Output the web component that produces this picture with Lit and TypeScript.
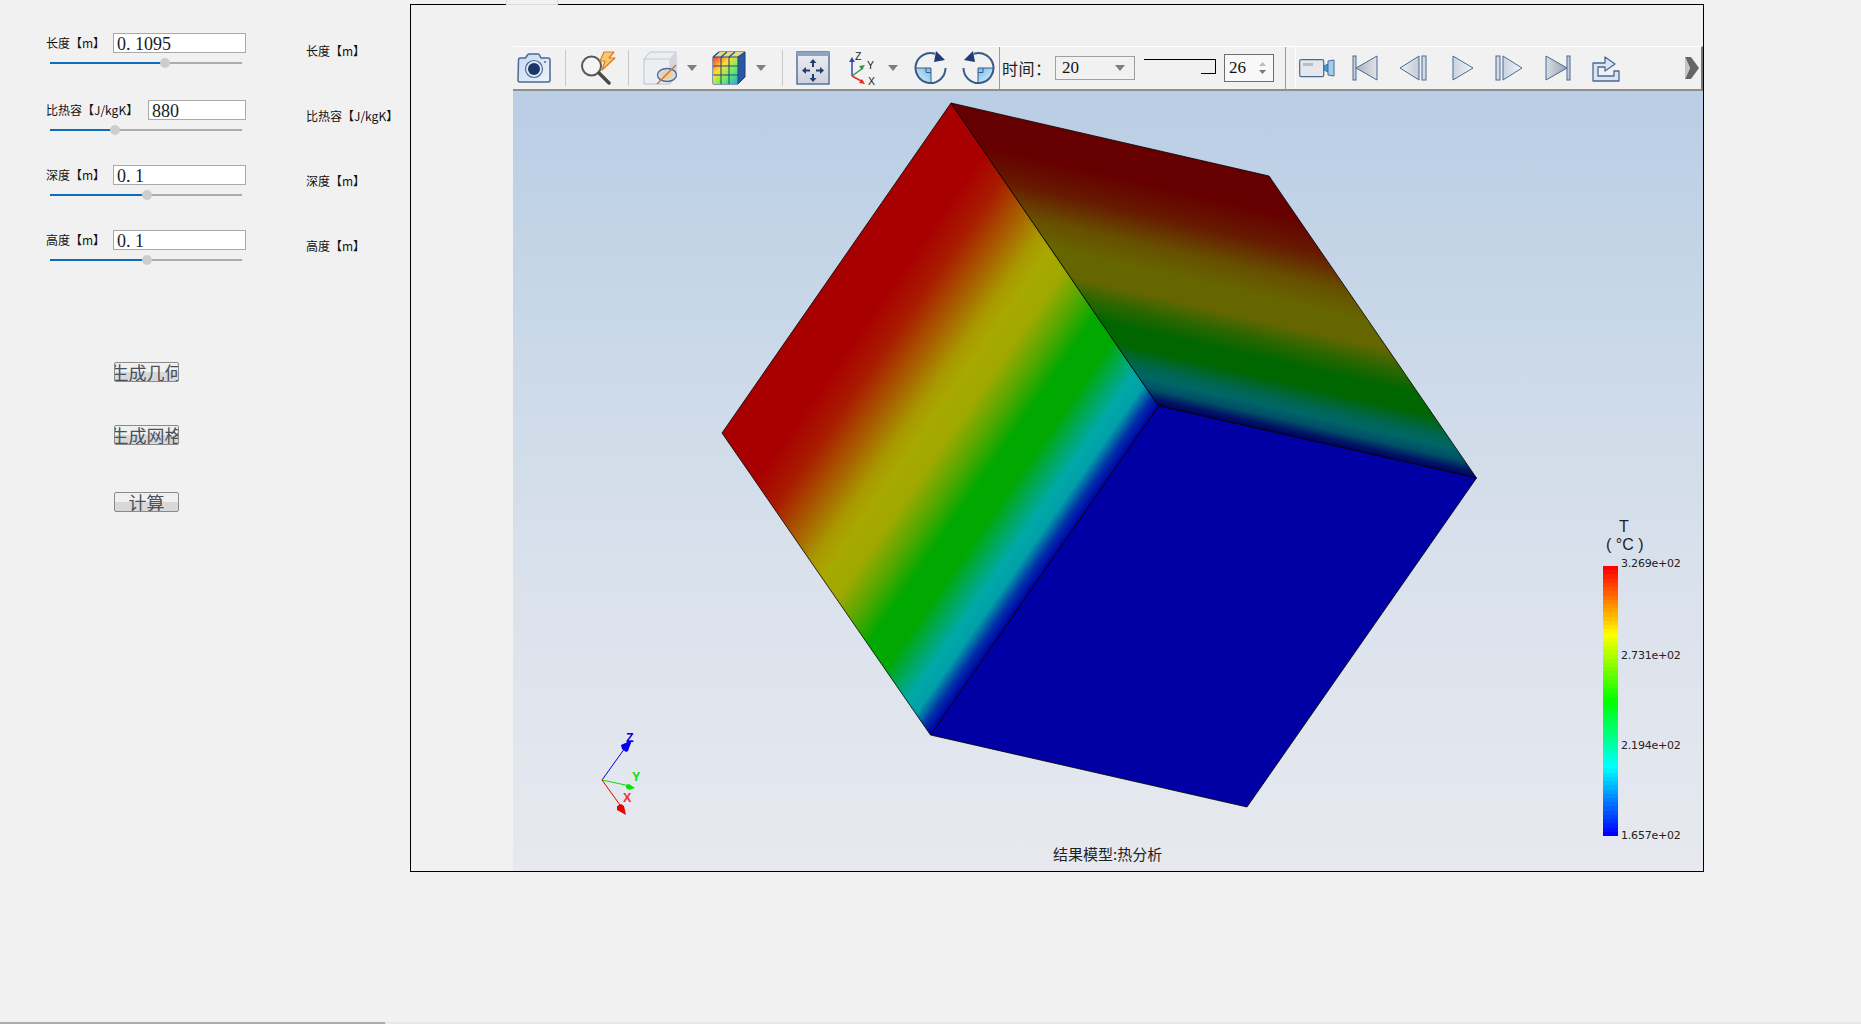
import { LitElement, html, css, svg } from "lit";
import { customElement } from "lit/decorators.js";

const params = [
  { label: "长度【m】", value: "0. 1095", pct: 60, cls: "r1", short: false },
  { label: "比热容【J/kgK】", value: "880", pct: 34, cls: "r2", short: true },
  { label: "深度【m】", value: "0. 1", pct: 50.5, cls: "r3", short: false },
  { label: "高度【m】", value: "0. 1", pct: 50.5, cls: "r4", short: false },
];

function rainbow(t: number): string {
  const seg = Math.min(3, Math.floor(t * 4));
  const f = t * 4 - seg;
  const c = Math.round(f * 255);
  const d = 255 - c;
  return [`rgb(255,${c},0)`, `rgb(${d},255,0)`, `rgb(0,255,${c})`, `rgb(0,${d},255)`][seg];
}
const BANDS = 64;
const barStops = Array.from({ length: BANDS }, (_, i) => {
  const col = rainbow(i / (BANDS - 1));
  return `${col} ${(i * 100) / BANDS}% ${((i + 1) * 100) / BANDS}%`;
}).join(",");

const drop = (cls: string) => html`<svg class="drop ${cls}" width="10" height="6" viewBox="0 0 10 6"><path d="M0 0h10L5 6z" fill="#7f7f7f"/></svg>`;

const S = "#4a6a94";

const rotateShape = svg`
  <path d="M1.500 17H17V32A15.500 15.500 0 0 1 1.500 17z" fill="url(#rg)"/>
  <path d="M1.500 17H17V31.500M12 17v4.500h5" fill="none" stroke="#3a5a84" stroke-width="1"/>
  <path d="M31.500 17A15 15 0 1 1 21 2.700" fill="none" stroke="#3a5a84" stroke-width="2"/>
  <path d="M22 0L31 9 20 11z" fill="#1f3d74"/>
`;

@customElement("app-root")
export class AppRoot extends LitElement {
  static styles = css`
    :host { display: block; width: 1861px; height: 1024px; background: #f1f1f1; position: relative; overflow: hidden;
      font-family: "Noto Sans CJK SC", "Liberation Sans", sans-serif; color: #111; }
    .page { display: flex; align-items: flex-start; height: 1024px; }
    .side { width: 306px; flex: none; padding: 33px 0 0 46px; box-sizing: border-box; }
    .rows { display: flex; flex-direction: column; width: 200px; }
    .row { height: 65px; }
    .row.r1 { height: 67px; }
    .line { display: flex; align-items: center; justify-content: space-between; height: 20px; }
    .lab { font-size: 12px; line-height: 20px; white-space: nowrap; }
    .in { width: 133px; height: 20px; box-sizing: border-box; border: 1px solid #a9a9a9; background: #fff;
      font: 18px/18px "Liberation Serif", "Noto Sans CJK SC", serif; padding: 1px 0 0 3px; color: #1a1a2a; white-space: pre; overflow: hidden; }
    .in.short { width: 98px; }
    .slider { width: 192px; margin: 9px 0 0 4px; height: 2px; background: #acacac; position: relative; }
    .slider b { display: block; height: 2px; background: #0f6cbd; }
    .slider u { position: absolute; top: -4px; width: 10px; height: 10px; margin-left: -5px; border-radius: 50%; background: #cdcdcd; }
    .btns { display: flex; flex-direction: column; margin: 67px 0 0 68px; gap: 43px; }
    .btn { width: 65px; height: 20px; box-sizing: border-box; border: 1px solid #8a8a8a; border-radius: 2px;
      background: linear-gradient(#f0f0f0 50%, #d8d8d8 50%); font: 18px/18px "Noto Sans CJK SC", sans-serif; color: #4a5060;
      overflow: hidden; white-space: nowrap; display: flex; justify-content: center; }
    .btn.third { margin-top: 4px; }
    .labs { width: 104px; flex: none; padding-top: 41px; display: flex; flex-direction: column; gap: 45px; font-size: 12px; line-height: 20px; }
    .labs div { white-space: nowrap; height: 20px; }
    .frame { width: 1294px; height: 868px; margin-top: 4px; border: 1px solid #000; background: #f1f1f1;
      padding: 41px 0 0 102px; box-sizing: border-box; position: relative; }
    .tab { position: absolute; left: 95px; top: -5px; width: 52px; height: 5px; box-sizing: border-box; background: #f1f1f1; border: 1px solid #dcdcdc; border-top: 0; }
    .toolbar { height: 45px; width: 1190px; box-sizing: border-box; border-top: 1px solid #fff; border-bottom: 2px solid #8e8e8e; border-right: 2px solid #777;
      display: flex; align-items: center; background: #f1f1f1; }
    .ic { flex: none; display: block; }
    .sep { flex: none; width: 1px; height: 36px; background: #c8c8c8; }
    .sep.full { height: 42px; background: #9a9a9a; }
    .vwhite { flex: none; width: 1px; height: 42px; background: #fff; margin-left: 9px; }
    .drop { flex: none; }
    .time { font: 16px/20px "Noto Sans CJK SC", sans-serif; letter-spacing: .5px; margin-left: 2px; white-space: nowrap; width: 53px; flex: none; color: #222; }
    .combo { width: 80px; height: 24px; box-sizing: border-box; border: 1px solid #a0a0a0; display: flex; align-items: center; justify-content: space-between; padding: 0 9px 0 6px;
      font: 17px "Liberation Serif", serif; flex: none; }
    .tslider { flex: none; width: 72px; height: 15px; margin: -3px 0 0 9px; position: relative; border-top: 1px solid #000; box-sizing: border-box; }
    .tslider i { position: absolute; right: 0; top: 0; width: 14px; height: 13px; border-right: 1px solid #000; border-bottom: 1px solid #000; background: #f1f1f1; }
    .spin { flex: none; margin-left: 8px; width: 50px; height: 28px; box-sizing: border-box; border: 1px solid #6e6e6e; display: flex; align-items: center; justify-content: space-between; padding: 0 7px 0 4px;
      font: 17px "Liberation Serif", serif; background: #f8f8f8; }
    .arrows { display: flex; flex-direction: column; gap: 4px; }
    .arrows svg { display: block; }
    .grow { flex: 1; }
    .m3 { margin-left: 3px; } .m4 { margin-left: 4px; }
    .m10 { margin-left: 10px; } .m11 { margin-left: 11px; } .m12 { margin-left: 12px; } .m13 { margin-left: 13px; }
    .m14 { margin-left: 14px; } .m15 { margin-left: 15px; } .m16 { margin-left: 16px; } .m17 { margin-left: 17px; }
    .m19 { margin-left: 19px; } .m21 { margin-left: 21px; } .m22 { margin-left: 22px; } .m25 { margin-left: 25px; }
    .mr2 { margin-right: 2px; }
    .view { width: 1190px; height: 780px; background: linear-gradient(#b9cde4 0%, #c9d8e8 30%, #dbe2ec 65%, #e7e9ef 100%); position: relative; overflow: hidden; }
    .scene { position: absolute; left: 0; top: 0; }
    .legend { position: absolute; left: 1090px; top: 428px; width: 100px; height: 330px; }
    .t { position: absolute; left: 16px; top: -1px; font: 16px/18px "Liberation Sans", sans-serif; color: #222; }
    .u { position: absolute; left: 3px; top: 17px; font: 16px/18px "Liberation Sans", sans-serif; color: #222; white-space: pre; }
    .bar { position: absolute; left: 0; top: 47px; width: 15px; height: 270px; }
    .tick { position: absolute; left: 18px; font: 11px/14px "DejaVu Sans", sans-serif; letter-spacing: -0.2px; color: #222; white-space: nowrap; }
    .k1 { top: 38px; } .k2 { top: 130px; } .k3 { top: 220px; } .k4 { top: 310px; }
    .caption { position: absolute; left: 540px; top: 753px; font-size: 15px; line-height: 20px; color: #222; white-space: nowrap; }
    .bottom { position: absolute; left: 0; bottom: 0; width: 385px; height: 2px; background: #acacac; }
    .bottom2 { position: absolute; left: 385px; right: 0; bottom: 0; height: 2px; background: #e8e8e8; }
  `;

  private icons() {
    return html`
      <svg class="ic m4" width="34" height="30" viewBox="0 0 34 30">
        <defs><linearGradient id="cam" x1="0" y1="0" x2="1" y2="1"><stop offset="0" stop-color="#c5d9f0"/><stop offset="1" stop-color="#eef4fb"/></linearGradient></defs>
        <path d="M1.500 7q0-2 2-2h5l2-3q.5-1 2-1h8q1.500 0 2 1l1.500 3h7q2 0 2 2v20q0 2-2 2h-28q-2 0-2-2z" fill="url(#cam)" stroke="${S}" stroke-width="1.500"/>
        <circle cx="17" cy="16" r="8.500" fill="#dfe9f6" stroke="${S}" stroke-width="1.200"/><circle cx="17" cy="16" r="6" fill="#1c3568"/>
        <circle cx="28" cy="9" r="1" fill="${S}"/>
      </svg>
      <i class="sep m14"></i>
      <svg class="ic m14" width="36" height="34" viewBox="0 0 36 34">
        <circle cx="11.500" cy="15" r="9.500" fill="#f4f4f4" stroke="#5a5a5a" stroke-width="2"/>
        <path d="M19 22l10 10" stroke="#4a4a4a" stroke-width="3.500" stroke-linecap="round"/>
        <path d="M24 1h10l-5 6h6L22 19l3-9h-5z" fill="#f6c875" stroke="#d97d1e" stroke-width="1.200" stroke-linejoin="round"/>
      </svg>
      <i class="sep m12"></i>
      <svg class="ic m14" width="34" height="34" viewBox="0 0 34 34">
        <path d="M1 8l6-7h26v24l-6 8H1z" fill="#eceef1" stroke="#bcc4d0"/>
        <path d="M1 8h26l6-7M27 8v25" fill="none" stroke="#c4cad4"/>
        <path d="M27 8l6-7v24l-6 8z" fill="#d3d6dc"/>
        <ellipse cx="24" cy="24" rx="9.500" ry="6.500" fill="#d8dce2" stroke="${S}" stroke-width="1.300"/><ellipse cx="24" cy="24" rx="6" ry="4" fill="#ead09a"/>
        <path d="M14 33L33 14" stroke="#d0703a" stroke-width="1.400"/>
      </svg>
      ${drop("m10")}
      <svg class="ic m15" width="34" height="34" viewBox="0 0 34 34">
        <defs><linearGradient id="cg" x1="0" y1="0" x2="1" y2="1"><stop offset="0" stop-color="#f33"/><stop offset=".35" stop-color="#fd3"/><stop offset=".65" stop-color="#6e6"/><stop offset="1" stop-color="#2ad"/></linearGradient></defs>
        <path d="M7 1h26v25l-7 7H1V6z" fill="#2a56a6" stroke="#1f3d74"/>
        <rect x="1" y="6" width="25" height="27" fill="url(#cg)"/>
        <path d="M7 1h26l-7 5H1z" fill="#e4d98e"/>
        <path d="M1 15h25M1 24h25M9 6v27M17 6v27M1 6h25M26 6v27M1 6l6-5M9 6l6-5M17 6l6-5M26 6l7-5" stroke="#2a4a74" stroke-width="1.100" fill="none"/>
      </svg>
      ${drop("m10")}
      <i class="sep m16"></i>
      <svg class="ic m13" width="34" height="34" viewBox="0 0 34 34">
        <defs><linearGradient id="fitg" x1="0" y1="0" x2="0" y2="1"><stop offset="0" stop-color="#eceef2"/><stop offset="1" stop-color="#cdd2dc"/></linearGradient></defs>
        <rect x="1" y="1" width="32" height="32" fill="url(#fitg)" stroke="${S}" stroke-width="1.400"/><rect x="1" y="1" width="32" height="4" fill="#8fa4c2"/>
        <path d="M17 8l3.500 4h-2.500v4h-2v-4h-2.500zM17 31l3.500-4h-2.500v-4h-2v4h-2.500zM6 19.500l4-3.500v2.500h4v2h-4v2.500zM28 19.500l-4-3.500v2.500h-4v2h4v2.500z" fill="#1f3d74"/>
      </svg>
      <svg class="ic m19" width="28" height="36" viewBox="0 0 28 36">
        <path d="M3 26V9" stroke="#2a4ea6" stroke-width="1.500"/><path d="M3 7l-3 5h6z" fill="#2a4ea6"/>
        <path d="M3 26L14 18" stroke="#2a9a4a" stroke-width="1.500"/><path d="M16 15l-6 1 3 4z" fill="#2a9a4a"/>
        <path d="M3 26l11 6" stroke="#e0302a" stroke-width="1.500"/><path d="M16 34l-6-1 3-4z" fill="#e0302a"/>
        <text x="6" y="10" font-size="10.500" font-family="Liberation Sans" fill="#222">Z</text>
        <text x="18" y="19" font-size="10.500" font-family="Liberation Sans" fill="#222">Y</text>
        <text x="19" y="35" font-size="10.500" font-family="Liberation Sans" fill="#222">X</text>
      </svg>
      ${drop("m11")}
      <svg class="ic m16" width="33" height="34" viewBox="0 0 33 34">
        <defs><linearGradient id="rg" x1="1" y1="0" x2="0" y2="1"><stop offset="0" stop-color="#6fbdec"/><stop offset="1" stop-color="#e6f2fb"/></linearGradient></defs>
        ${rotateShape}
      </svg>
      <svg class="ic m15" width="33" height="34" viewBox="0 0 33 34">
        <g transform="matrix(-1 0 0 1 33 0)">${rotateShape}</g>
      </svg>
    `;
  }

  private player() {
    return html`
      <i class="sep full m11"></i>
      <i class="vwhite"></i>
      <svg class="ic m3" width="36" height="20" viewBox="0 0 36 20">
        <rect x="0.700" y="1.700" width="24" height="17" rx="1.500" fill="#e4e7ec" stroke="${S}" stroke-width="1.200"/>
        <rect x="4" y="5" width="10" height="3" fill="#b8bec8"/>
        <path d="M25 8l4-2v8l-4-2z" fill="#3f9fd8" stroke="${S}"/>
        <path d="M29 3l6-1v16l-6-1z" fill="#9fd0ef" stroke="${S}"/>
      </svg>
      <svg class="ic m17" width="26" height="26" viewBox="0 0 26 26">
        <defs><linearGradient id="p1" x1="0" x2="1" y1="0" y2="0"><stop offset="0" stop-color="#a9b2bf"/><stop offset="1" stop-color="#dfe3e9"/></linearGradient></defs>
        <rect x="1" y="1" width="3" height="24" fill="#c7ced9" stroke="${S}"/><path d="M25 1L4 13l21 12z" fill="url(#p1)" stroke="${S}"/>
      </svg>
      <svg class="ic m21" width="28" height="26" viewBox="0 0 28 26">
        <defs><linearGradient id="p2" x1="0" x2="1" y1="0" y2="0"><stop offset="0" stop-color="#eef0f4"/><stop offset="1" stop-color="#c3cbd8"/></linearGradient></defs>
        <rect x="23" y="1" width="4" height="24" fill="#d5dbe3" stroke="${S}"/><path d="M20 1L1 13l19 12z" fill="url(#p2)" stroke="${S}"/>
      </svg>
      <svg class="ic m25" width="22" height="26" viewBox="0 0 22 26">
        <defs><linearGradient id="p3" x1="0" x2="1" y1="0" y2="0"><stop offset="0" stop-color="#c9d2df"/><stop offset="1" stop-color="#f2f4f7"/></linearGradient></defs>
        <path d="M1 1l20 12L1 25z" fill="url(#p3)" stroke="${S}"/>
      </svg>
      <svg class="ic m21" width="28" height="26" viewBox="0 0 28 26">
        <rect x="1" y="1" width="4" height="24" fill="#d5dbe3" stroke="${S}"/><path d="M8 1l19 12L8 25z" fill="url(#p3)" stroke="${S}"/>
      </svg>
      <svg class="ic m22" width="26" height="26" viewBox="0 0 26 26">
        <defs><linearGradient id="p4" x1="0" x2="1" y1="0" y2="0"><stop offset="0" stop-color="#d8dde5"/><stop offset="1" stop-color="#98a2b2"/></linearGradient></defs>
        <rect x="22" y="1" width="3" height="24" fill="#c7ced9" stroke="${S}"/><path d="M1 1l21 12L1 25z" fill="url(#p4)" stroke="${S}"/>
      </svg>
      <svg class="ic m21" width="28" height="27" viewBox="0 0 28 27">
        <path d="M1 8h12V2l10 7-10 7v-4H6v9h16v-5h5v10H1z" fill="#dbe5f2" stroke="${S}" stroke-width="1.300" stroke-linejoin="round"/>
      </svg>
      <span class="grow"></span>
      <svg class="ic mr2" width="14" height="22" viewBox="0 0 14 22">
        <path d="M0 0h6l8 11-8 11H0l5-11z" fill="#666"/><path d="M0 0l5 11-5 11z" fill="#c4c4c4"/>
      </svg>
    `;
  }

  private scene() {
    return html`<svg class="scene" width="1190" height="780" viewBox="513 91 1190 780">
      <defs>
        <linearGradient id="lf" gradientUnits="userSpaceOnUse" x1="951" y1="103" x2="1233" y2="298.500">
          <stop offset=".16" stop-color="#a80000"/><stop offset=".25" stop-color="#a81c00"/>
          <stop offset=".35" stop-color="#a86000"/><stop offset=".43" stop-color="#a89a00"/>
          <stop offset=".48" stop-color="#a8a800"/><stop offset=".55" stop-color="#a0a800"/>
          <stop offset=".63" stop-color="#50a800"/><stop offset=".7" stop-color="#00a800"/>
          <stop offset=".78" stop-color="#00a800"/><stop offset=".84" stop-color="#00a860"/>
          <stop offset=".89" stop-color="#00a8a8"/><stop offset=".93" stop-color="#00a0a8"/>
          <stop offset=".97" stop-color="#0030a8"/><stop offset="1" stop-color="#0000a8"/>
        </linearGradient>
        <linearGradient id="tf" gradientUnits="userSpaceOnUse" x1="951" y1="103" x2="895.300" y2="345.700">
          <stop offset=".14" stop-color="#660000"/><stop offset=".26" stop-color="#661a00"/>
          <stop offset=".38" stop-color="#665000"/><stop offset=".48" stop-color="#666600"/>
          <stop offset=".57" stop-color="#666600"/><stop offset=".64" stop-color="#306600"/>
          <stop offset=".72" stop-color="#006600"/><stop offset=".79" stop-color="#006600"/>
          <stop offset=".86" stop-color="#006650"/><stop offset=".9" stop-color="#006666"/>
          <stop offset=".94" stop-color="#004f66"/><stop offset=".975" stop-color="#001566"/>
          <stop offset="1" stop-color="#00005a"/>
        </linearGradient>
      </defs>
      <path d="M951 103L1158.500 406L930.500 735L722 433z" fill="url(#lf)" stroke="#000" stroke-width=".8"/>
      <path d="M951 103L1269 176L1476.500 478L1158.500 406z" fill="url(#tf)" stroke="#000" stroke-width=".8"/>
      <path d="M1158.500 406L1476.500 478L1247 807L930.500 735z" fill="#0000a4" stroke="#000" stroke-width=".8"/>
      <g fill="none" stroke-width="1">
        <path d="M602 780L625 748" stroke="#0000e6"/><path d="M602 780L630 786" stroke="#00e600"/><path d="M602 780L620 805" stroke="#e60000"/>
      </g>
      <path d="M632 740l-11 5 1 4 4 3 2-1z" fill="#0000ee"/><path d="M635 788l-6-4-3 1v3l3 2z" fill="#00e600"/><path d="M626 815l-9-5v-4l4-2 3 2z" fill="#ee0000"/>
      <g font-family="Liberation Sans" font-weight="700" font-size="12.500">
        <text x="626" y="742" fill="#0000e6">Z</text><text x="632" y="781" fill="#00e600">Y</text><text x="623" y="802" fill="#f03030">X</text>
      </g>
    </svg>`;
  }

  render() {
    return html`
      <div class="page">
        <div class="side">
          <div class="rows">
            ${params.map(p => html`<div class="row ${p.cls}">
              <div class="line"><span class="lab">${p.label}</span><span class="in ${p.short ? "short" : ""}">${p.value}</span></div>
              <div class="slider"><b style="width:${p.pct}%"></b><u style="left:${p.pct}%"></u></div>
            </div>`)}
          </div>
          <div class="btns">
            <div class="btn">生成几何</div>
            <div class="btn">生成网格</div>
            <div class="btn third">计算</div>
          </div>
        </div>
        <div class="labs">
          ${params.map(p => html`<div>${p.label}</div>`)}
        </div>
        <div class="frame">
          <div class="tab"></div>
          <div class="toolbar">
            ${this.icons()}
            <i class="sep full m4"></i>
            <span class="time">时间：</span>
            <div class="combo"><span>20</span>${drop("")}</div>
            <div class="tslider"><i></i></div>
            <div class="spin"><span>26</span><span class="arrows"><svg width="7" height="4" viewBox="0 0 7 4"><path d="M0 4h7L3.500 0z" fill="#bbb"/></svg><svg width="7" height="4" viewBox="0 0 7 4"><path d="M0 0h7L3.500 4z" fill="#777"/></svg></span></div>
            ${this.player()}
          </div>
          <div class="view">
            ${this.scene()}
            <div class="legend">
              <span class="t">T</span>
              <span class="u">( °C )</span>
              <div class="bar" style="background:linear-gradient(${barStops})"></div>
              <span class="tick k1">3.269e+02</span>
              <span class="tick k2">2.731e+02</span>
              <span class="tick k3">2.194e+02</span>
              <span class="tick k4">1.657e+02</span>
            </div>
            <div class="caption">结果模型:热分析</div>
          </div>
        </div>
      </div>
      <div class="bottom"></div><div class="bottom2"></div>
    `;
  }
}
